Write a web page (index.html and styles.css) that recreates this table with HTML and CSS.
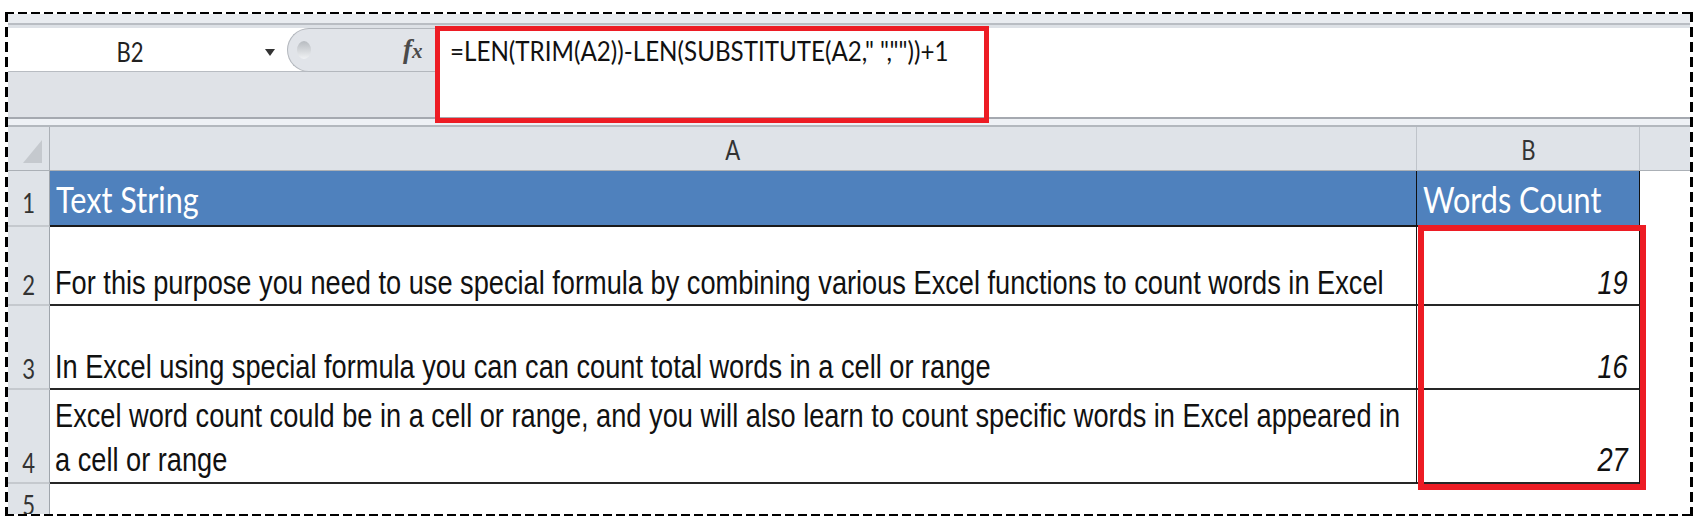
FILE: index.html
```html
<!DOCTYPE html>
<html lang="en">
<head>
<meta charset="utf-8">
<title>Excel word count</title>
<link rel="stylesheet" href="styles.css">
</head>
<body>
<div class="frame">
  <div class="ribbon-edge"></div>
  <div class="formula-bar">
    <div class="fb-left">
      <div class="fb-top">
        <div class="name-box">
          <span class="nb-text ui-txt">B2</span>
          <span class="dd"></span>
        </div>
        <div class="pill">
          <span class="knob"></span>
          <span class="fx">f<span class="fx-x">x</span></span>
        </div>
      </div>
      <div class="fb-bottom"></div>
    </div>
    <div class="fb-input"><span class="formula ui-txt">=LEN(TRIM(A2))-LEN(SUBSTITUTE(A2," ",""))+1</span></div>
    <div class="hl hl-formula"></div>
  </div>
  <div class="sep"></div>
  <div class="sheet">
    <div class="corner"><span class="corner-tri"></span></div>
    <div class="colh"><span class="ui-txt hdr">A</span></div>
    <div class="colh"><span class="ui-txt hdr">B</span></div>
    <div class="colh colh-c"></div>

    <div class="rowh rowh-1"><span class="ui-txt hdr">1</span></div>
    <div class="cell-head"><span class="head-txt">Text String</span></div>
    <div class="cell-head"><span class="head-txt">Words Count</span></div>
    <div class="blank"></div>

    <div class="rowh"><span class="ui-txt hdr">2</span></div>
    <div class="cell"><span class="txt">For this purpose you need to use special formula by combining various Excel functions to count words in Excel</span></div>
    <div class="cell num"><span class="txt">19</span></div>
    <div class="blank"></div>

    <div class="rowh"><span class="ui-txt hdr">3</span></div>
    <div class="cell"><span class="txt">In Excel using special formula you can can count total words in a cell or range</span></div>
    <div class="cell num"><span class="txt">16</span></div>
    <div class="blank"></div>

    <div class="rowh"><span class="ui-txt hdr">4</span></div>
    <div class="cell cell-2l"><span class="txt">Excel word count could be in a cell or range, and you will also learn to count specific words in Excel appeared in<br>a cell or range</span></div>
    <div class="cell num cell-2l"><span class="txt">27</span></div>
    <div class="blank"></div>

    <div class="rowh rowh-5"><span class="ui-txt hdr">5</span></div>
    <div class="blank"></div>
    <div class="blank"></div>
    <div class="blank"></div>

    <div class="hl hl-range"></div>
  </div>
</div>
</body>
</html>
```

FILE: styles.css
```css
* { box-sizing: border-box; }
html, body { margin: 0; padding: 0; background: #fff; }
body {
  width: 1702px;
  height: 530px;
  overflow: hidden;
  font-family: Lato, "Open Sans", sans-serif;
}

.frame {
  margin: 12px 0 0 5px;
  width: 1688px;
  height: 504px;
  padding: 2px 3px;
  display: flex;
  flex-direction: column;
  background:
    repeating-linear-gradient(to right, #000 0 9px, transparent 9px 13px) left top / 100% 2px no-repeat,
    repeating-linear-gradient(to right, #000 0 9px, transparent 9px 13px) left bottom / 100% 2px no-repeat,
    repeating-linear-gradient(to bottom, #000 0 10px, transparent 10px 15px) left top / 3px 100% no-repeat,
    repeating-linear-gradient(to bottom, #000 0 10px, transparent 10px 15px) right top / 3px 100% no-repeat,
    #fff;
}

.ribbon-edge {
  height: 14px;
  flex: none;
  background: linear-gradient(to bottom, #e9ecf0 0 9px, #b9bdc3 9px 11px, #dde1e6 11px 14px);
}

/* formula bar */
.formula-bar {
  height: 89px;
  flex: none;
  display: flex;
  position: relative;
}
.fb-left {
  width: 427px;
  display: flex;
  flex-direction: column;
}
.fb-top {
  height: 44px;
  display: flex;
}
.name-box {
  width: 301px;
  background: #fff;
  border-bottom: 1px solid #b8bcc2;
  display: flex;
  align-items: center;
}
.ui-txt {
  display: inline-block;
  font-size: 26px;
  line-height: 26px;
  white-space: pre;
  transform: scaleX(.85);
}
.nb-text {
  width: 60px;
  margin-left: 92px;
  margin-top: 4px;
  text-align: center;
  color: #222;
}
.dd {
  align-self: flex-start;
  margin-top: 21px;
  margin-left: 105px;
  width: 0;
  height: 0;
  border-left: 5.5px solid transparent;
  border-right: 5.5px solid transparent;
  border-top: 7px solid #333;
}
.pill {
  flex: 1;
  margin-left: -22px;
  background: #e1e4e9;
  border: 1px solid #b3b7bd;
  border-right: none;
  border-radius: 22px 0 0 22px;
  display: flex;
  align-items: center;
}
.knob {
  width: 14px;
  height: 18px;
  margin-left: 9px;
  border-radius: 50%;
  background: linear-gradient(#b7bbc0, #f0f2f4);
}
.fx {
  margin-left: 92px;
  font-family: "Liberation Serif", serif;
  font-style: italic;
  font-weight: 700;
  font-size: 27px;
  line-height: 27px;
  color: #4a4a4a;
}
.fx-x { font-size: 21px; }
.fb-bottom {
  flex: 1;
  background: #dfe2e7;
}
.fb-input {
  flex: 1;
  background: #fff;
  padding: 10px 0 0 15px;
}
.formula {
  transform: scaleX(.93);
  transform-origin: 0 50%;
  color: #111;
}

.hl {
  position: absolute;
  border: 5px solid #ed1c24;
  pointer-events: none;
}
.hl-formula {
  left: 427px;
  top: -2px;
  width: 554px;
  height: 97px;
}

.sep {
  height: 10px;
  flex: none;
  background: linear-gradient(to bottom, #a5a9b0 0 2px, #eef1f5 2px 8px, #b3b8be 8px 10px);
}

/* sheet grid */
.sheet {
  display: grid;
  grid-template-columns: 42px 1367px 223px 50px;
  grid-template-rows: 44px 56px 79px 84px 94px 30px;
  position: relative;
}
.corner {
  background: #dfe3e8;
  border-right: 1px solid #abb0b6;
  border-bottom: 1px solid #abb0b6;
  display: flex;
  justify-content: flex-end;
  align-items: flex-end;
  padding: 0 7px 7px 0;
}
.corner-tri {
  width: 19px;
  height: 23px;
  background: #c5c9ce;
  clip-path: polygon(100% 0, 100% 100%, 0 100%);
}
.colh {
  background: #dfe3e8;
  border-right: 1px solid #bfc4ca;
  border-bottom: 1px solid #abb0b6;
  display: flex;
  align-items: center;
  justify-content: center;
  padding-top: 2px;
}
.colh-c { border-right: none; }
.hdr { color: #333; }

.rowh {
  background: #dfe3e8;
  border-right: 1px solid #9fa5ac;
  border-bottom: 2px solid #c5c9ce;
  display: flex;
  align-items: flex-end;
  justify-content: center;
  padding-bottom: 6px;
  overflow: hidden;
}
.rowh-1 { padding-bottom: 9px; }
.rowh-5 {
  align-items: flex-start;
  padding: 8px 0 0;
  border-bottom: none;
}

.cell-head {
  background: #4f81bd;
  border-right: 1px solid #111;
  border-bottom: 2px solid #1a1a1a;
  display: flex;
  align-items: flex-end;
  padding: 0 0 8px 6px;
}
.head-txt {
  display: inline-block;
  white-space: nowrap;
  color: #fff;
  font-size: 36px;
  line-height: 36px;
  transform: scaleX(.85);
  transform-origin: 0 100%;
}

.cell {
  background: #fff;
  border-right: 1px solid #111;
  border-bottom: 2px solid #262626;
  display: flex;
  align-items: flex-end;
  padding-left: 5px;
  font-family: "Liberation Sans", Arial, sans-serif;
  font-size: 33px;
  line-height: 42px;
  color: #111;
}
.cell-2l { line-height: 44px; }
.txt {
  display: inline-block;
  white-space: nowrap;
  transform: scaleX(.824);
  transform-origin: 0 100%;
}
.num {
  justify-content: flex-end;
  padding: 0 11px 0 0;
  font-style: italic;
}
.num .txt { transform-origin: 100% 100%; }

.blank { background: #fff; }

.hl-range {
  left: 1410px;
  top: 98px;
  width: 228px;
  height: 265px;
  border-width: 6px;
}
```
